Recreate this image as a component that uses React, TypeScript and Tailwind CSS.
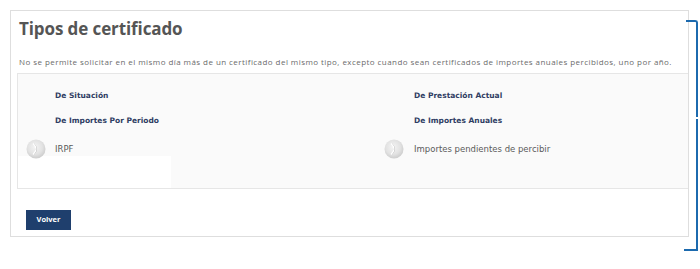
import React from 'react';

function ArrowCircle() {
  return (
    <svg width="20" height="20" viewBox="0 0 20 20">
      <defs>
        <radialGradient id="g" cx="45%" cy="40%" r="65%">
          <stop offset="0%" stopColor="#f4f4f4" />
          <stop offset="60%" stopColor="#e2e2e2" />
          <stop offset="100%" stopColor="#c8c8c8" />
        </radialGradient>
      </defs>
      <circle cx="10" cy="10" r="9.5" fill="url(#g)" />
      <path d="M7.5 4 Q14.5 10 7.5 16 Q11.2 10 7.5 4 Z" fill="#a9a9a9" />
      <path d="M7 4.6 Q13 10 7 15.4" stroke="#ffffff" strokeWidth="1.3" fill="none" />
    </svg>
  );
}

export default function App() {
  const label = 'text-[7.5px] font-bold text-[#2f3d63] leading-none';
  const item = 'text-[8.5px] text-[#5a5a5a] leading-none';
  return (
    <div className="relative w-[700px] h-[269px] bg-white" style={{ fontFamily: '"Open Sans", sans-serif' }}>
      <div className="ml-[10px] mt-[10px] w-[679px] h-[227px] border border-[#dedede] pl-[6px] flex flex-col">
        <h1 className="pl-[2px] pt-[6px] text-[17px] font-bold text-[#555555] leading-[24px] tracking-[-0.1px]">Tipos de certificado</h1>
        <p className="pl-[2px] mt-[16px] text-[8px] text-[#6b6b6b] leading-[10px] tracking-[0.44px]">
          No se permite solicitar en el mismo día más de un certificado del mismo tipo, excepto cuando sean certificados de importes anuales percibidos, uno por año.
        </p>
        <div
          className="relative mt-[6px] h-[116px] border-t border-b border-l border-[#e6e6e6] bg-[#fafafa] grid grid-cols-[357px_1fr]"
          style={{ fontFamily: '"DejaVu Sans", Verdana, sans-serif' }}
        >
          <div className="absolute left-0 top-[82px] w-[153px] h-[32px] bg-white" />
          <div className="relative flex flex-col pl-[37px] pt-[18px]">
            <span className={label}>De Situación</span>
            <span className={`${label} mt-[17px]`}>De Importes Por Periodo</span>
            <div className="flex items-center -ml-[29px] mt-[15px]">
              <ArrowCircle />
              <span className={`${item} ml-[9px]`}>IRPF</span>
            </div>
          </div>
          <div className="relative flex flex-col pl-[39px] pt-[18px]">
            <span className={label}>De Prestación Actual</span>
            <span className={`${label} mt-[17px]`}>De Importes Anuales</span>
            <div className="flex items-center -ml-[30px] mt-[15px]">
              <ArrowCircle />
              <span className={`${item} ml-[10px]`}>Importes pendientes de percibir</span>
            </div>
          </div>
        </div>
        <div className="pl-[9px] mt-[15px]">
          <button className="w-[45px] h-[20px] bg-[#1f3f6d] text-white text-[7.5px] font-bold">Volver</button>
        </div>
      </div>
      <div className="absolute left-[686px] top-[10px] w-[12px] h-[231px] border-t-2 border-r-2 border-b-0 border-[#1c6aae] rounded-tr-[3px]" />
      <div className="absolute left-[684px] top-[239px] w-[14px] h-[2px] bg-[#1c6aae] rounded-br-[2px]" />
      <div className="absolute left-[696px] top-[107px] w-[3px] h-[2px] bg-white" />
    </div>
  );
}
